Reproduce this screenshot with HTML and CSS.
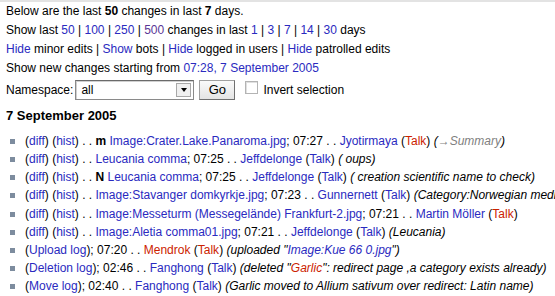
FILE: index.html
```html
<!DOCTYPE html>
<html>
<head>
<meta charset="utf-8">
<link rel="stylesheet" href="styles.css">
</head>
<body>
<div class="topbar"></div>
<div class="content">
  <p class="line">Below are the last <b>50</b> changes in last <b>7</b> days.</p>
  <p class="line">Show last <a href="#">50</a> | <a href="#">100</a> | <a href="#">250</a> | <a href="#" class="visited">500</a> changes in last <a href="#">1</a> | <a href="#">3</a> | <a href="#">7</a> | <a href="#">14</a> | <a href="#">30</a> days</p>
  <p class="line"><a href="#">Hide</a> minor edits | <a href="#">Show</a> bots | <a href="#">Hide</a> logged in users | <a href="#">Hide</a> patrolled edits</p>
  <p class="line">Show new changes starting from <a href="#">07:28, 7 September 2005</a></p>
  <form class="nsform">
    <span class="label">Namespace:</span>
    <span class="select"><span class="selval">all</span><span class="selarrow"><span class="tri"></span></span></span>
    <span class="gobtn">Go</span>
    <span class="check"></span>
    <span class="label">Invert selection</span>
  </form>
  <h4 class="day">7 September 2005</h4>
  <ul class="changes">
    <li>(<a href="#">diff</a>) (<a href="#">hist</a>) . . <b>m</b> <a href="#">Image:Crater.Lake.Panaroma.jpg</a>; 07:27 . . <a href="#">Jyotirmaya</a> (<a href="#" class="new">Talk</a>) <i class="comment">(<span class="auto">→Summary</span>)</i></li>
    <li>(<a href="#">diff</a>) (<a href="#">hist</a>) . . <a href="#">Leucania comma</a>; 07:25 . . <a href="#">Jeffdelonge</a> (<a href="#">Talk</a>) <i class="comment">( oups)</i></li>
    <li>(<a href="#">diff</a>) (<a href="#">hist</a>) . . <b>N</b> <a href="#">Leucania comma</a>; 07:25 . . <a href="#">Jeffdelonge</a> (<a href="#">Talk</a>) <i class="comment">( creation scientific name to check)</i></li>
    <li>(<a href="#">diff</a>) (<a href="#">hist</a>) . . <a href="#">Image:Stavanger domkyrkje.jpg</a>; 07:23 . . <a href="#">Gunnernett</a> (<a href="#">Talk</a>) <i class="comment">(Category:Norwegian medieval churches)</i></li>
    <li>(<a href="#">diff</a>) (<a href="#">hist</a>) . . <a href="#">Image:Messeturm (Messegelände) Frankfurt-2.jpg</a>; 07:21 . . <a href="#">Martin Möller</a> (<a href="#" class="new">Talk</a>)</li>
    <li>(<a href="#">diff</a>) (<a href="#">hist</a>) . . <a href="#">Image:Aletia comma01.jpg</a>; 07:21 . . <a href="#">Jeffdelonge</a> (<a href="#">Talk</a>) <i class="comment">(Leucania)</i></li>
    <li>(<a href="#">Upload log</a>); 07:20 . . <a href="#" class="new">Mendrok</a> (<a href="#" class="new">Talk</a>) <i class="comment">(uploaded "<a href="#">Image:Kue 66 0.jpg</a>")</i></li>
    <li>(<a href="#">Deletion log</a>); 02:46 . . <a href="#">Fanghong</a> (<a href="#">Talk</a>) <i class="comment">(deleted "<a href="#" class="new">Garlic</a>": redirect page ,a category exists already)</i></li>
    <li>(<a href="#">Move log</a>); 02:40 . . <a href="#">Fanghong</a> (<a href="#">Talk</a>) <i class="comment">(Garlic moved to Allium sativum over redirect: Latin name)</i></li>
  </ul>
</div>
</body>
</html>
```

FILE: styles.css
```css
html, body {
  margin: 0;
  padding: 0;
  background: #fff;
}
body {
  font-family: "Liberation Sans", Arial, sans-serif;
  font-size: 12px;
  color: #000;
  overflow: hidden;
}
.topbar {
  height: 2px;
  background: #e3e3e3;
}
.content {
  padding: 0 0 0 6px;
}
.line {
  margin: 0;
  line-height: 19px;
  white-space: nowrap;
}
a {
  color: #2a2ac0;
  text-decoration: none;
}
a.visited {
  color: #5a3696;
}
a.new {
  color: #cc2200;
}
.nsform {
  display: flex;
  align-items: center;
  height: 24px;
  margin: 0;
}
.label {
  white-space: nowrap;
}
.select {
  display: flex;
  align-items: stretch;
  width: 117px;
  height: 18px;
  margin-left: 2px;
  border: 1px solid #8a8a8a;
  border-top-color: #6a6a6a;
  background: #fff;
  box-shadow: inset 1px 1px 0 #d0d0d0;
}
.selval {
  flex: 1;
  padding-left: 5px;
  line-height: 18px;
}
.selarrow {
  width: 13px;
  margin: 2px 2px 2px 0;
  border: 1px solid #a8a8a8;
  background: #f0f0f0;
  display: flex;
  align-items: center;
  justify-content: center;
}
.tri {
  width: 0;
  height: 0;
  border-left: 3px solid transparent;
  border-right: 3px solid transparent;
  border-top: 4px solid #000;
}
.gobtn {
  width: 34px;
  height: 18px;
  margin-left: 5px;
  border: 1px solid #a0a0a0;
  border-right-color: #707070;
  border-bottom-color: #707070;
  background: linear-gradient(#fafafa, #e4e4e4);
  text-align: center;
  line-height: 18px;
  font-size: 13px;
}
.check {
  width: 11px;
  height: 11px;
  margin-left: 10px;
  margin-right: 5px;
  border: 1px solid #b4b4b4;
  background: #fff;
  box-shadow: inset 1px 1px 0 #e0e0e0;
  align-self: flex-start;
  margin-top: 3px;
}
.day {
  margin: 0;
  font-size: 13px;
  font-weight: bold;
  line-height: 28px;
}
.changes {
  list-style: none;
  margin: 2px 0 0;
  padding: 0;
}
.changes li {
  position: relative;
  padding-left: 19px;
  line-height: 18.15px;
  white-space: nowrap;
}
.changes li::before {
  content: "";
  position: absolute;
  left: 4px;
  top: 7px;
  width: 5px;
  height: 5px;
  background: #7d8c9e;
}
.comment {
  font-style: italic;
}
.auto {
  color: #808080;
}
```
